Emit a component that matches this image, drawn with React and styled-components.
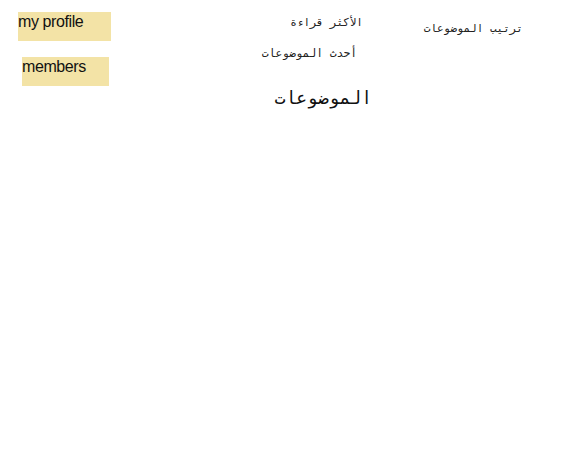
import React from "react";
import styled, { createGlobalStyle } from "styled-components";

const Global = createGlobalStyle`
  html, body { margin: 0; padding: 0; background: #fff; }
  body { font-family: "Liberation Sans", Arial, sans-serif; }
`;

const Page = styled.div`
  display: flex;
  align-items: flex-start;
  width: 565px;
  height: 449px;
`;

const Side = styled.div`
  display: flex;
  flex-direction: column;
  align-items: flex-start;
  gap: 16px;
  padding: 12px 0 0 18px;
  width: 222px;
  box-sizing: border-box;
`;

const NavBox = styled.a`
  display: block;
  box-sizing: border-box;
  width: ${(p) => p.$w}px;
  height: 29px;
  margin-left: ${(p) => p.$ml || 0}px;
  padding-top: 1px;
  background: #f3e3a6;
  color: #111;
  font-size: 16px;
  letter-spacing: -0.4px;
  text-decoration: none;
  line-height: 18px;
`;

const Middle = styled.div`
  direction: rtl;
  width: 150px;
  display: flex;
  flex-direction: column;
  padding-top: 15px;
  font-family: "DejaVu Sans Mono", monospace;
`;

const Link = styled.a`
  display: block;
  font-size: ${(p) => p.$fs || 11}px;
  color: #222;
  text-decoration: none;
  margin-right: ${(p) => p.$mr || 0}px;
  line-height: 16px;
  margin-bottom: ${(p) => p.$mb || 0}px;
  white-space: nowrap;
`;

const Heading = styled.h2`
  margin: 25px 0 0 0;
  font-size: 18px;
  font-weight: normal;
  color: #111;
  line-height: 22px;
  white-space: nowrap;
`;

const Right = styled.div`
  direction: rtl;
  margin-left: 51px;
  padding-top: 21px;
  width: 100px;
  font-family: "DejaVu Sans Mono", monospace;
  font-size: 11px;
  color: #222;
  line-height: 16px;
  white-space: nowrap;
`;

export default function App() {
  return (
    <>
      <Global />
      <Page>
        <Side>
          <NavBox href="#" $w={93}>my profile</NavBox>
          <NavBox href="#" $w={87} $ml={4}>members</NavBox>
        </Side>
        <Middle>
          <Link href="#" $mr={9} $mb={15}>الأكثر قراءة</Link>
          <Link href="#" $mr={15} $fs={11.3}>أحدث الموضوعات</Link>
          <Heading>الموضوعات</Heading>
        </Middle>
        <Right>ترتيب الموضوعات</Right>
      </Page>
    </>
  );
}
